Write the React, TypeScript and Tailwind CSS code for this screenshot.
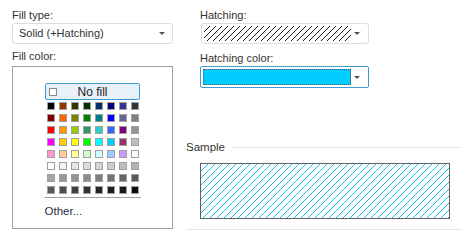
import React from "react";

const swatches: string[][] = [
  ["#000000", "#993300", "#333300", "#003300", "#003366", "#000080", "#333399", "#333333"],
  ["#800000", "#ff6600", "#808000", "#008000", "#008080", "#0000ff", "#666699", "#808080"],
  ["#ff0000", "#ff9900", "#99cc00", "#339966", "#33cccc", "#3366ff", "#800080", "#969696"],
  ["#ff00ff", "#ffcc00", "#ffff00", "#00ff00", "#00ffff", "#00ccff", "#993366", "#c0c0c0"],
  ["#ff99cc", "#ffcc99", "#ffff99", "#ccffcc", "#ccffff", "#99ccff", "#cc99ff", "#ffffff"],
  ["#ffffff", "#f2f2f2", "#e6e6e6", "#dddddd", "#d4d4d4", "#cccccc", "#bfbfbf", "#b3b3b3"],
  ["#a6a6a6", "#999999", "#959595", "#8c8c8c", "#808080", "#737373", "#666666", "#5a5a5a"],
  ["#595959", "#4d4d4d", "#404040", "#333333", "#262626", "#1f1f1f", "#1a1a1a", "#0d0d0d"],
];

function Arrow() {
  return (
    <span className="w-0 h-0 border-l-[3px] border-r-[3px] border-t-[3px] border-l-transparent border-r-transparent border-t-[#555]" />
  );
}

// diagonal "/" hatching, drawn with aliased strokes like the native control
function Hatch({ id, color, pitch, width }: { id: string; color: string; pitch: number; width: number }) {
  const p = pitch;
  return (
    <svg className="absolute inset-0 w-full h-full">
      <defs>
        <pattern id={id} width={p} height={p} patternUnits="userSpaceOnUse">
          <path
            d={`M0,${p} L${p},0 M${-p / 2},${p / 2} L${p / 2},${-p / 2} M${p / 2},${p * 1.5} L${p * 1.5},${p / 2}`}
            stroke={color}
            strokeWidth={width}
            shapeRendering="crispEdges"
          />
        </pattern>
      </defs>
      <rect width="100%" height="100%" fill={`url(#${id})`} />
    </svg>
  );
}

export default function App() {
  return (
    <div
      className="w-[473px] h-[250px] bg-white text-[11px] text-[#333] flex pt-[9px] pl-[12px]"
      style={{ fontFamily: '"Liberation Sans", Arial, sans-serif' }}
    >
      <div className="w-[161px] flex flex-col">
        <div className="leading-[13px]">Fill type:</div>
        <div className="mt-[1px] h-[21px] border border-[#dcdcdc] rounded-[3px] flex items-center justify-between pl-[6px] pr-[7px]">
          <span>Solid (+Hatching)</span>
          <Arrow />
        </div>
        <div className="mt-[6px] leading-[13px]">Fill color:</div>
        <div className="mt-[3px] h-[163px] border border-[#a0a0a0] flex flex-col items-center pt-[16px]">
          <div className="w-[95px] h-[17px] border border-[#3c9ad6] rounded-[2px] bg-[#e8f1f9] flex items-center px-[3px]">
            <span className="w-[8px] h-[8px] border border-[#8a8a8a] bg-white" />
            <span className="flex-1 text-center text-[12px] text-[#222] pr-[8px]">No fill</span>
          </div>
          <div className="mt-[2px] grid grid-cols-8 gap-[4px]">
            {swatches.flat().map((c, i) => (
              <span key={i} className="w-[8px] h-[8px] border border-[#a0a0a0]" style={{ backgroundColor: c }} />
            ))}
          </div>
          <div className="mt-[3px] w-[96px] h-[1px] bg-[#a0a0a0]" />
          <div className="w-[96px] mt-[6px] text-[11.5px] text-[#1f2f4a] leading-[14px]">Other...</div>
        </div>
      </div>

      <div className="ml-[13px] w-[276px] flex flex-col">
        <div className="pl-[14px] flex flex-col">
          <div className="leading-[13px]">Hatching:</div>
          <div className="mt-[1px] ml-[1px] w-[168px] h-[21px] border border-[#dcdcdc] rounded-[3px] flex items-center pl-[2px] pr-[8px]">
            <div className="relative w-[147px] h-[15px] overflow-hidden">
              <Hatch id="h1" color="#1a1a1a" pitch={6} width={1} />
            </div>
            <span className="flex-1" />
            <Arrow />
          </div>
          <div className="mt-[8px] leading-[13px]">Hatching color:</div>
          <div className="mt-[1px] w-[169px] h-[22px] border border-[#3c9ad6] rounded-[2px] flex items-center pl-[2px] pr-[8px]">
            <div className="w-[148px] h-[16px] bg-[#00ccff] border border-dotted border-[#555]" />
            <span className="flex-1" />
            <Arrow />
          </div>
        </div>

        <div className="mt-[53px] flex items-center">
          <span className="text-[11.5px] leading-[13px]">Sample</span>
          <span className="ml-[7px] flex-1 h-[1px] bg-[#e6e6e6]" />
        </div>
        <div className="ml-[14px] mt-[9px] relative w-[250px] h-[56px] border border-[#606060] overflow-hidden">
          <Hatch id="h2" color="#12c0ef" pitch={7} width={1} />
        </div>
        <div className="mt-[10px] h-[1px] bg-[#e6e6e6]" />
      </div>
    </div>
  );
}
